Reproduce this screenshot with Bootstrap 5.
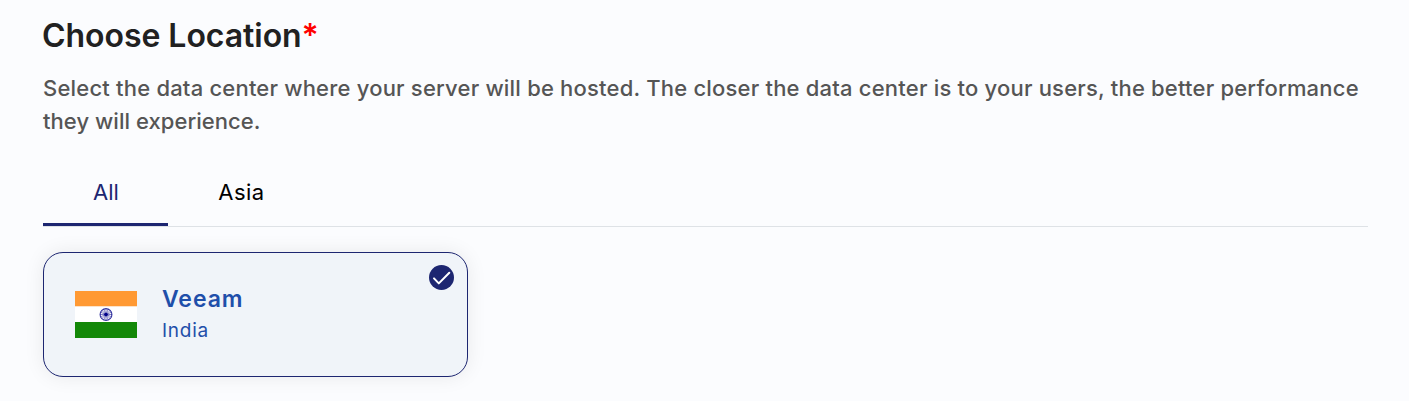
<!DOCTYPE html>
<html lang="en">
<head>
<meta charset="utf-8">
<meta name="viewport" content="width=device-width, initial-scale=1">
<title>Choose Location</title>
<link href="https://cdn.jsdelivr.net/npm/bootstrap@5.3.0/dist/css/bootstrap.min.css" rel="stylesheet">
<style>
body { background: #fbfcfe; font-family: Inter, "Open Sans", sans-serif; min-height: 401px; overflow: hidden; }
.location-picker { padding: 16px 41px 0 43px; }
.picker-title { font-size: 32px; line-height: 40px; font-weight: 600; color: #212121; letter-spacing: -.05px; margin-left: -1px; }
.required-mark { color: #f00; }
.picker-intro { font-size: 22px; line-height: 33px; font-weight: 500; color: #555; margin-top: 16px; margin-bottom: 30px; letter-spacing: .2px; white-space: nowrap; }
.intro-end { letter-spacing: .05px; }
.region-tabs { height: 59px; border-bottom: 1px solid #dee2e6; }
.region-tabs .nav-link { height: 58px; padding: 0 50px 7px; border: 0; border-bottom: 3px solid transparent; border-radius: 0; background: none; color: #000; font-size: 22px; line-height: 33px; }
.region-tabs .nav-link.active { color: #1d2671; background: none; border-bottom-color: #1d2671; }
.tab-all { width: 125px; }
.tab-asia { width: 147px; letter-spacing: .5px; }
.location-card { width: 425px; height: 125px; margin-top: 25px; padding-left: 31px; background: #f0f4f9; border: 1px solid #1d2671; border-radius: 20px; box-shadow: 0 0 20px rgba(0,0,0,.08); }
.location-names { margin-left: 25px; padding-bottom: 1px; color: #1f4faa; }
.provider-name { font-size: 23px; line-height: 33px; font-weight: 600; letter-spacing: .95px; }
.country-name { font-size: 19px; line-height: 29px; letter-spacing: .75px; }
.selected-mark { top: 12px; right: 13px; }
</style>
</head>
<body>
<main class="location-picker">
  <h1 class="picker-title mb-0"><span>Choose Location</span><span class="required-mark">*</span></h1>
  <p class="picker-intro">Select the data center where your server will be hosted. The closer the data center is to your users, the better performance<br><span class="intro-end">they will experience.</span></p>
  <ul class="nav region-tabs" role="tablist">
    <li class="nav-item"><button class="nav-link active tab-all" type="button" role="tab" aria-selected="true">All</button></li>
    <li class="nav-item"><button class="nav-link tab-asia" type="button" role="tab" aria-selected="false">Asia</button></li>
  </ul>
  <div class="location-card position-relative d-flex align-items-center">
    <svg width="62" height="48" viewBox="0 0 62 48" role="img" aria-label="India">
      <path fill="#f93" d="M0 0h62v15.5H0z"/>
      <path fill="#fff" d="M0 15.5h62V31H0z"/>
      <path fill="#138808" d="M0 31h62v16H0z"/>
      <g stroke="#000088" fill="none">
        <circle cx="31" cy="23.5" r="5.9" stroke-width="1.2" opacity=".75"/>
        <path d="M31 17.5v12M25 23.5h12M26.8 19.3l8.4 8.4M35.2 19.3l-8.4 8.4M28.7 18l4.6 11M33.3 18l-4.6 11M25.5 21.2l11 4.6M25.5 25.8l11-4.6" stroke-width=".75" opacity=".65"/>
      </g>
      <circle cx="31" cy="23.5" r="1.8" fill="#000088"/>
    </svg>
    <div class="location-names">
      <div class="provider-name"><span>Veeam</span></div>
      <div class="country-name"><span>India</span></div>
    </div>
    <svg class="selected-mark position-absolute" width="25" height="25" viewBox="0 0 25 25" aria-hidden="true">
      <circle cx="12.5" cy="12.5" r="12.5" fill="#1d2671"/>
      <path d="M5 13.4l4.8 5L20.3 7.8" fill="none" stroke="#fff" stroke-width="2" stroke-linecap="round" stroke-linejoin="round"/>
    </svg>
  </div>
</main>
<script src="https://cdn.jsdelivr.net/npm/bootstrap@5.3.0/dist/js/bootstrap.bundle.min.js"></script>
</body>
</html>
